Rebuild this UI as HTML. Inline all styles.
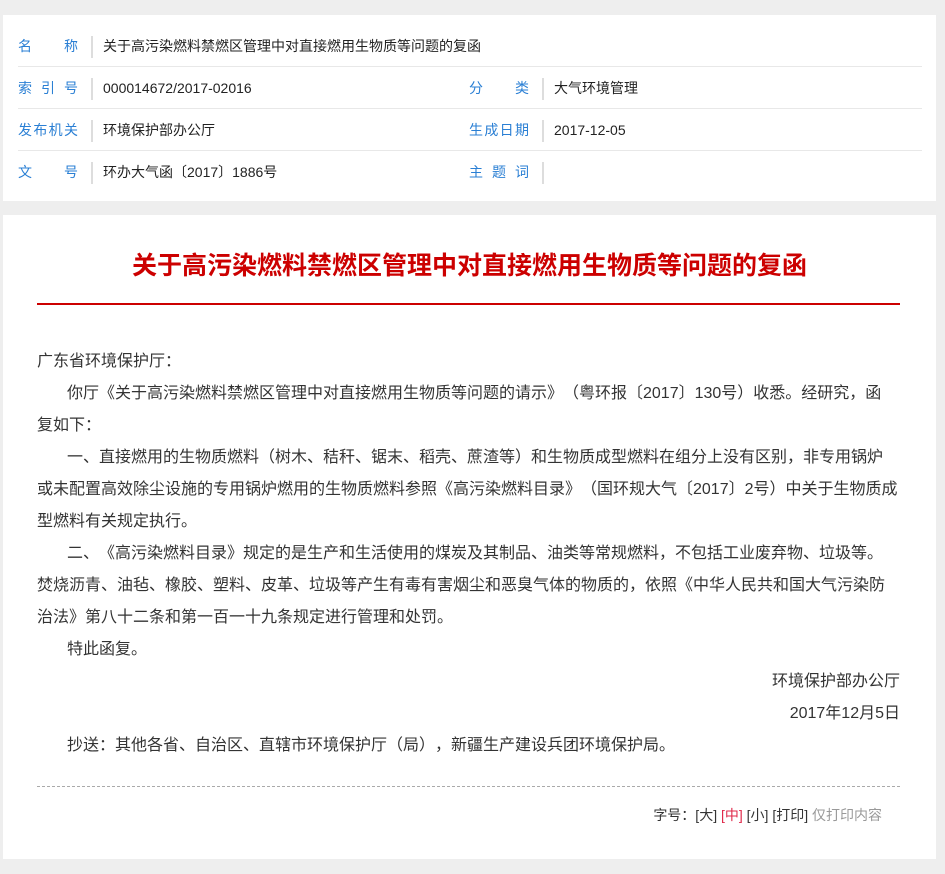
<!DOCTYPE html>
<html><head><meta charset="utf-8">
<style>
*{margin:0;padding:0;box-sizing:border-box}
body{width:945px;height:874px;background:#eeeeee;font-family:"Liberation Sans","Noto Sans CJK SC",sans-serif;color:#333;overflow:hidden;position:relative;text-spacing-trim:space-all}
.box1{position:absolute;left:3px;top:15px;width:933px;height:186px;background:#fff}
.row{position:absolute;left:15px;width:904px;height:42px;border-bottom:1px solid #e8e8e8;font-size:14px}
.row.last{border-bottom:none}
.lab{position:absolute;top:0;line-height:42px;color:#2a7fd4;width:60px;text-align:justify;text-align-last:justify}
.div{position:absolute;top:11px;width:2px;height:22px;background:#ddd}
.val{position:absolute;top:0;line-height:42px;color:#222}
.box2{position:absolute;left:3px;top:215px;width:933px;height:644px;background:#fff}
h1{position:absolute;left:0;width:939px;top:248px;text-align:center;font-size:25px;color:#c00;font-weight:bold;line-height:36px;white-space:nowrap}
.red{position:absolute;left:37px;width:863px;top:303px;height:2px;background:#c00}
.body{position:absolute;left:37px;width:880px;top:346px;font-size:16px;line-height:32px;color:#333;white-space:nowrap}
.body p{text-indent:30px}
.body p.ni{text-indent:0}
.body p.r{text-align:right;text-indent:0;width:863px}
.dash{position:absolute;left:37px;width:863px;top:786px;border-top:1px dashed #aaa}
.foot{position:absolute;right:63px;top:805px;font-size:14px;line-height:20px;color:#333}
</style></head><body>
<div class="box1">
 <div class="row" style="top:10px"><span class="lab">名称</span><span class="div" style="left:73px"></span><span class="val" style="left:85px">关于高污染燃料禁燃区管理中对直接燃用生物质等问题的复函</span></div>
 <div class="row" style="top:52px"><span class="lab">索引号</span><span class="div" style="left:73px"></span><span class="val" style="left:85px">000014672/2017-02016</span>
   <span class="lab" style="left:451px">分类</span><span class="div" style="left:524px"></span><span class="val" style="left:536px">大气环境管理</span></div>
 <div class="row" style="top:94px"><span class="lab">发布机关</span><span class="div" style="left:73px"></span><span class="val" style="left:85px">环境保护部办公厅</span>
   <span class="lab" style="left:451px">生成日期</span><span class="div" style="left:524px"></span><span class="val" style="left:536px">2017-12-05</span></div>
 <div class="row last" style="top:136px"><span class="lab">文号</span><span class="div" style="left:73px"></span><span class="val" style="left:85px">环办大气函〔2017〕1886号</span>
   <span class="lab" style="left:451px">主题词</span><span class="div" style="left:524px"></span></div>
</div>
<div class="box2"></div>
<h1>关于高污染燃料禁燃区管理中对直接燃用生物质等问题的复函</h1>
<div class="red"></div>
<div class="body">
<p class="ni">广东省环境保护厅：</p>
<p>你厅《关于高污染燃料禁燃区管理中对直接燃用生物质等问题的请示》（粤环报〔2017〕130号）收悉。经研究，函<br>复如下：</p>
<p>一、直接燃用的生物质燃料（树木、秸秆、锯末、稻壳、蔗渣等）和生物质成型燃料在组分上没有区别，非专用锅炉<br>或未配置高效除尘设施的专用锅炉燃用的生物质燃料参照《高污染燃料目录》（国环规大气〔2017〕2号）中关于生物质成<br>型燃料有关规定执行。</p>
<p>二、《高污染燃料目录》规定的是生产和生活使用的煤炭及其制品、油类等常规燃料，不包括工业废弃物、垃圾等。<br>焚烧沥青、油毡、橡胶、塑料、皮革、垃圾等产生有毒有害烟尘和恶臭气体的物质的，依照《中华人民共和国大气污染防<br>治法》第八十二条和第一百一十九条规定进行管理和处罚。</p>
<p>特此函复。</p>
<p class="r">环境保护部办公厅</p>
<p class="r">2017年12月5日</p>
<p>抄送：其他各省、自治区、直辖市环境保护厅（局），新疆生产建设兵团环境保护局。</p>
</div>
<div class="dash"></div>
<div class="foot">字号：[大] <span style="color:#e0294a">[中]</span> [小] [打印] <span style="color:#999">仅打印内容</span></div>
</body></html>
